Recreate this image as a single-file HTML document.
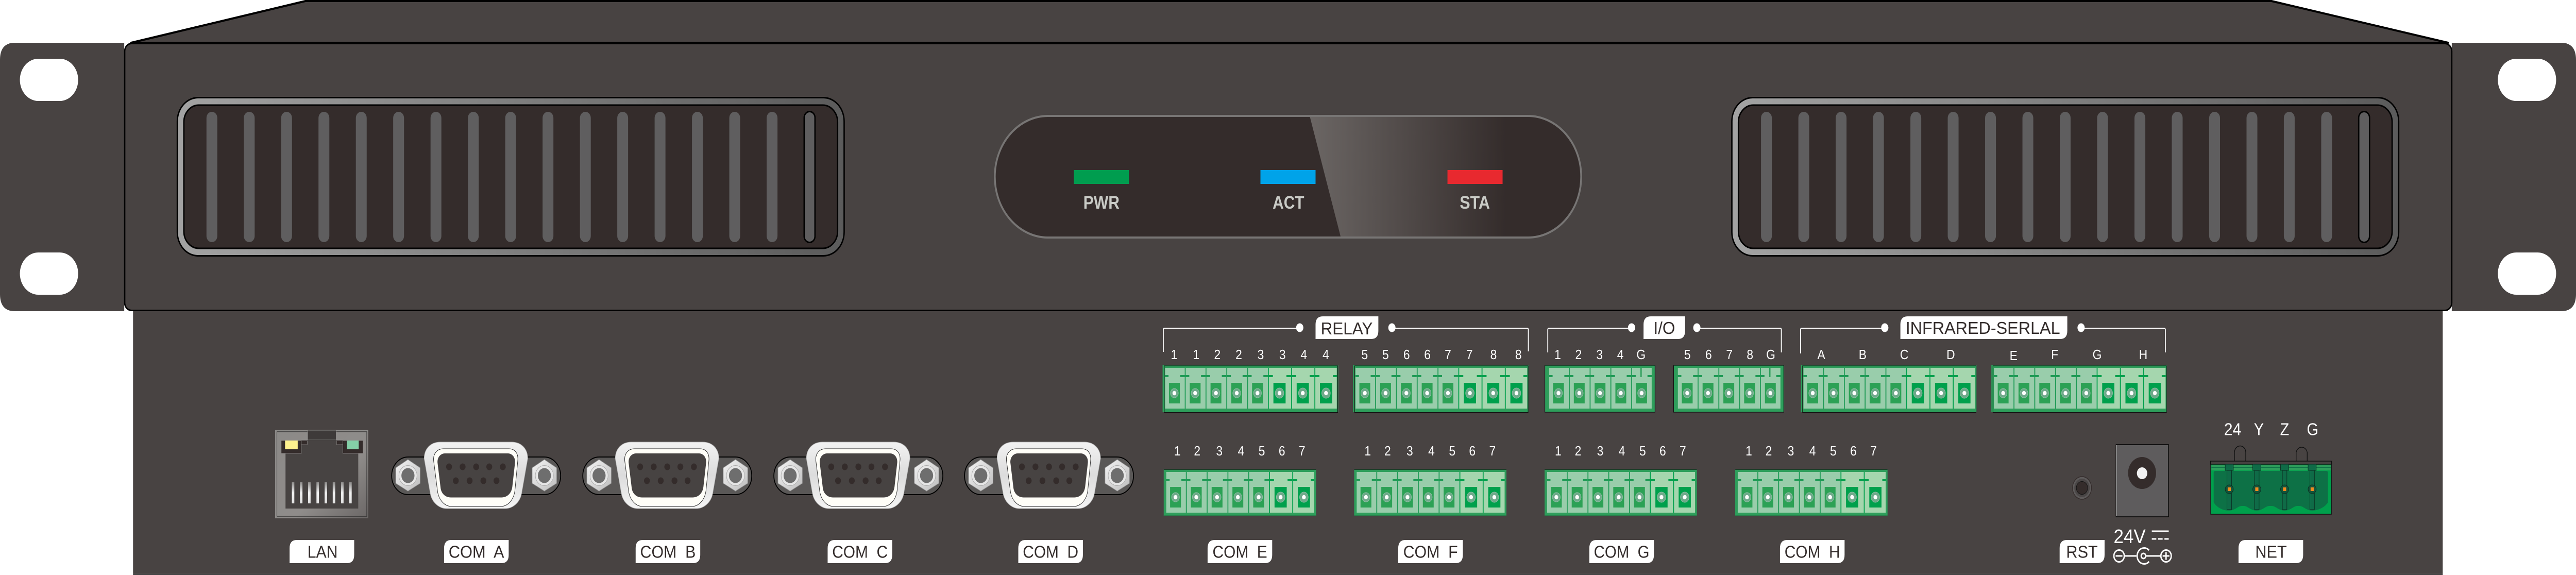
<!DOCTYPE html>
<html>
<head>
<meta charset="utf-8">
<style>
html,body{margin:0;padding:0;background:#fff;width:100%;height:100%;overflow:hidden}
svg{display:block;width:100vw;height:100vh}
text{font-family:"Liberation Sans",sans-serif}
.l{font-size:33px;fill:#332c2b}
.n{font-size:26px;fill:#fff;text-anchor:middle}
.s{font-size:33px;fill:#fff}
.p{font-size:35px;font-weight:bold;fill:#c9cbc6}
</style>
</head>
<body>
<svg xmlns="http://www.w3.org/2000/svg" viewBox="0 0 5702 1116" preserveAspectRatio="none">
<defs>
<linearGradient id="band" x1="0" x2="1" y1="0" y2="0"><stop offset="0" stop-color="#a3a3a3"/><stop offset="1" stop-color="#5b5b5b"/></linearGradient>
<linearGradient id="hl" gradientUnits="userSpaceOnUse" x1="2899" x2="3334" y1="0" y2="0"><stop offset="0" stop-color="#6b6664"/><stop offset="1" stop-color="#342c2b"/></linearGradient>
<linearGradient id="rj" x1="0" x2="1" y1="0" y2="1"><stop offset="0" stop-color="#8c8a88"/><stop offset=".6" stop-color="#8f8c8a"/><stop offset="1" stop-color="#6b6766"/></linearGradient>
<linearGradient id="pin" x1="0" x2="0" y1="0" y2="1"><stop offset="0" stop-color="#8d8b8a"/><stop offset=".5" stop-color="#f2f2f2"/><stop offset="1" stop-color="#e2e2e2"/></linearGradient>
<linearGradient id="nut" x1="0" x2="1" y1="0" y2="1"><stop offset="0" stop-color="#f4f4f4"/><stop offset="1" stop-color="#bdbdbd"/></linearGradient>
<linearGradient id="shell" x1="0" x2="0" y1="0" y2="1"><stop offset="0" stop-color="#f2f2f2"/><stop offset=".5" stop-color="#dcdcdc"/><stop offset="1" stop-color="#f4f4f4"/></linearGradient>
<clipPath id="ledc"><rect x="2202" y="225" width="1298" height="236" rx="118" ry="118"/></clipPath>

<g id="vent">
<rect x="392.5" y="189.5" width="1476" height="307" rx="46" fill="url(#band)" stroke="#000" stroke-width="3"/>
<rect x="407" y="204" width="1447" height="278" rx="33" fill="#342c2b" stroke="#000" stroke-width="3"/>
<g fill="#5f5e5f">
<rect x="457" y="217" width="24" height="253" rx="12"/><rect x="539.7" y="217" width="24" height="253" rx="12"/><rect x="622.3" y="217" width="24" height="253" rx="12"/><rect x="705" y="217" width="24" height="253" rx="12"/><rect x="787.7" y="217" width="24" height="253" rx="12"/><rect x="870.3" y="217" width="24" height="253" rx="12"/><rect x="953" y="217" width="24" height="253" rx="12"/><rect x="1035.7" y="217" width="24" height="253" rx="12"/><rect x="1118.3" y="217" width="24" height="253" rx="12"/><rect x="1201" y="217" width="24" height="253" rx="12"/><rect x="1283.7" y="217" width="24" height="253" rx="12"/><rect x="1366.3" y="217" width="24" height="253" rx="12"/><rect x="1449" y="217" width="24" height="253" rx="12"/><rect x="1531.7" y="217" width="24" height="253" rx="12"/><rect x="1614.3" y="217" width="24" height="253" rx="12"/><rect x="1697" y="217" width="24" height="253" rx="12"/>
<rect x="1780" y="216.5" width="24" height="254" rx="12" stroke="#000" stroke-width="3"/>
</g>
</g>

<g id="cs">
<rect x="0" y="6" width="46" height="79" fill="#99cdab"/>
<rect x="0" y="6" width="2" height="79" fill="#1e9a55"/>
<rect x="0" y="20" width="10" height="4" fill="#1e9a55"/><rect x="36" y="20" width="10" height="4" fill="#1e9a55"/>
<rect x="11" y="35" width="24" height="40" fill="#2ca155"/>
<ellipse cx="23" cy="55" rx="8.7" ry="9" fill="#6fa98a" stroke="#8fbfa5"/>
<circle cx="23" cy="55" r="4.2" fill="#fff"/>
</g>
<g id="cw">
<rect x="0" y="6" width="51.5" height="79" fill="#a5d6ae"/>
<rect x="0" y="6" width="2" height="79" fill="#00a04c"/>
<rect x="0" y="20" width="11" height="4" fill="#00a04c"/><rect x="41" y="20" width="10.5" height="4" fill="#00a04c"/>
<rect x="12.2" y="35" width="27" height="40" fill="#00a04c"/>
<ellipse cx="25.7" cy="55" rx="9.5" ry="10" fill="#6fa98a" stroke="#8fbfa5"/>
<circle cx="25.7" cy="55" r="4.2" fill="#fff"/>
</g>

<g id="b53">
<rect x="0" y="0" width="388.5" height="92" fill="#2e9e5b"/>
<use href="#cs" x="3"/><use href="#cs" x="49"/><use href="#cs" x="95"/><use href="#cs" x="141"/><use href="#cs" x="187"/>
<use href="#cw" x="233"/><use href="#cw" x="284.5"/><use href="#cw" x="336"/>
<rect x="0" y="0" width="5.5" height="92" fill="#2e9e5b"/>
<rect x="385.5" y="0" width="3" height="92" fill="#2e9e5b"/>
<rect x="3.5" y="2" width="384" height="90.5" fill="none" stroke="#111" stroke-width="1.2"/>
</g>
<g id="b52">
<rect x="0" y="0" width="337" height="92" fill="#2e9e5b"/>
<use href="#cs" x="3"/><use href="#cs" x="49"/><use href="#cs" x="95"/><use href="#cs" x="141"/><use href="#cs" x="187"/>
<use href="#cw" x="233"/><use href="#cw" x="284.5"/>
<rect x="0" y="0" width="5.5" height="92" fill="#2e9e5b"/>
<rect x="333" y="0" width="4" height="92" fill="#2e9e5b"/>
<rect x="0" y="0.5" width="337" height="1.2" fill="#111"/><rect x="0" y="90.8" width="337" height="1.2" fill="#111"/>
</g>
<g id="b50">
<rect x="0" y="0" width="245" height="92" fill="#2e9e5b"/>
<use href="#cs" x="7.7"/><use href="#cs" x="53.7"/><use href="#cs" x="99.7"/><use href="#cs" x="145.7"/><use href="#cs" x="191.7"/>
<rect x="0" y="0" width="10" height="92" fill="#2e9e5b"/>
<rect x="237" y="0" width="8" height="92" fill="#2e9e5b"/>
<rect x="212" y="6" width="3" height="18" fill="#2e9e5b"/>
<rect x="0.6" y="1" width="243.8" height="91" fill="none" stroke="#111" stroke-width="1.2"/>
</g>

<g id="db9">
<rect x="867" y="887" width="374" height="73" rx="36.5" fill="#5a5857" stroke="#000" stroke-width="2"/>
<polygon points="903,892 930,908 930,938 903,953 876,938 876,908" fill="url(#nut)" stroke="#999"/>
<ellipse cx="903" cy="923" rx="20" ry="19.5" fill="#e6e6e6" stroke="#aaa"/>
<circle cx="903" cy="923" r="14.5" fill="#6e6e6e"/>
<polygon points="1205,892 1232,908 1232,938 1205,953 1178,938 1178,908" fill="url(#nut)" stroke="#999"/>
<ellipse cx="1205" cy="923" rx="20" ry="19.5" fill="#e6e6e6" stroke="#aaa"/>
<circle cx="1205" cy="923" r="14.5" fill="#6e6e6e"/>
<path d="M975,858 H1132 C1155,858 1168,872 1168,890 L1155,955 C1152,975 1135,987 1118,987 H989 C972,987 955,975 952,955 L939,890 C939,872 952,858 975,858 Z" fill="url(#shell)" stroke="#bbb"/>
<path d="M982,871 H1126 C1140,871 1148,880 1146,895 L1140,950 C1138,970 1124,983 1108,983 H1000 C984,983 970,970 968,950 L960,895 C958,880 968,871 982,871 Z" fill="#fffef8" stroke="#222" stroke-width="1"/>
<path d="M985,880 H1124 C1134,880 1141,888 1140,898 L1134,945 C1132,958 1122,965.5 1110,965.5 H998 C986,965.5 976,958 975,945 L968.5,898 C967.5,888 975,880 985,880 Z" fill="#474342"/>
<g fill="#342c2b">
<ellipse cx="994" cy="906" rx="6.5" ry="6.5"/><ellipse cx="1024" cy="906" rx="6.5" ry="6.5"/><ellipse cx="1054" cy="906" rx="6.5" ry="6.5"/><ellipse cx="1083" cy="906" rx="6.5" ry="6.5"/><ellipse cx="1113" cy="906" rx="6.5" ry="6.5"/>
<ellipse cx="1009" cy="933" rx="6.5" ry="6.5"/><ellipse cx="1039.5" cy="933" rx="6.5" ry="6.5"/><ellipse cx="1070" cy="933" rx="6.5" ry="6.5"/><ellipse cx="1099" cy="933" rx="6.5" ry="6.5"/>
</g>
</g>
</defs>

<!-- ears -->
<path d="M33,83 H275 V604 H33 Q0,604 0,571 V116 Q0,83 33,83 Z" fill="#484342"/>
<path d="M5669,83 H5427 V604 H5669 Q5702,604 5702,571 V116 Q5702,83 5669,83 Z" fill="#484342"/>
<g fill="#fff">
<rect x="44" y="114" width="129" height="82" rx="41"/>
<rect x="44" y="490" width="129" height="82" rx="41"/>
<rect x="5529" y="114" width="129" height="82" rx="41"/>
<rect x="5529" y="490" width="129" height="82" rx="41"/>
</g>

<!-- lower body -->
<rect x="294.5" y="600" width="5112.5" height="514.5" fill="#484342"/>
<rect x="294.5" y="1114" width="5112.5" height="1.5" fill="#000"/>

<!-- top -->
<polygon points="290,83 676,2 5028,2 5419,83" fill="#484342" stroke="#000" stroke-width="4" stroke-linejoin="round"/>

<!-- front panel -->
<rect x="276" y="84.5" width="5151" height="518" rx="15" fill="#484342" stroke="#000" stroke-width="3"/>

<use href="#vent"/>
<use href="#vent" x="3441"/>

<!-- LED window -->
<rect x="2202" y="225" width="1298" height="236" rx="118" fill="#342c2b"/>
<polygon points="2899,225 3500,225 3500,461 2968,461" fill="url(#hl)" clip-path="url(#ledc)"/>
<rect x="2202" y="225" width="1298" height="236" rx="118" fill="none" stroke="#777574" stroke-width="4"/>
<rect x="2377" y="330" width="122" height="27" fill="#009d4f"/>
<rect x="2790" y="330" width="122" height="27" fill="#00a3e9"/>
<rect x="3204" y="330" width="122" height="27" fill="#e8292f"/>
<text class="p" x="2398" y="405" textLength="80" lengthAdjust="spacingAndGlyphs">PWR</text>
<text class="p" x="2817" y="405" textLength="70" lengthAdjust="spacingAndGlyphs">ACT</text>
<text class="p" x="3231" y="405" textLength="67" lengthAdjust="spacingAndGlyphs">STA</text>

<!-- RJ45 -->
<rect x="609" y="835" width="206" height="171" fill="url(#rj)"/>
<rect x="613" y="838" width="199" height="164" fill="none" stroke="#222" stroke-width="1.2"/>
<rect x="681" y="835" width="63" height="19" fill="#3e3a39" stroke="#8b8987"/>
<rect x="632" y="880" width="161" height="107" fill="#474342"/>
<rect x="667" y="854" width="92" height="27" fill="#474342"/>
<rect x="622.5" y="855" width="44.5" height="25" fill="#342c2b" stroke="#8b8987" stroke-width=".8"/>
<rect x="759" y="855" width="44.5" height="25" fill="#342c2b" stroke="#8b8987" stroke-width=".8"/>
<rect x="631" y="855" width="28" height="17" fill="#fdf18e"/>
<rect x="768" y="855" width="26" height="17" fill="#84cfa7"/>
<rect x="667" y="855" width="13" height="8" fill="#342c2b" stroke="#8b8987" stroke-width=".8"/>
<rect x="745" y="855" width="14" height="8" fill="#342c2b" stroke="#8b8987" stroke-width=".8"/>
<g fill="url(#pin)">
<rect x="646" y="936" width="5.5" height="41"/><rect x="664" y="936" width="5.5" height="41"/><rect x="682" y="936" width="5.5" height="41"/><rect x="700.5" y="936" width="5.5" height="41"/><rect x="718.5" y="936" width="5.5" height="41"/><rect x="736.5" y="936" width="5.5" height="41"/><rect x="755" y="936" width="5.5" height="41"/><rect x="773" y="936" width="5.5" height="41"/>
</g>

<!-- DB9 -->
<use href="#db9"/>
<use href="#db9" x="423"/>
<use href="#db9" x="846"/>
<use href="#db9" x="1268"/>

<!-- labels -->
<g fill="#fff">
<path d="M657 1048h127v29q0 16 -16 16h-127v-29q0 -16 16 -16z"/>
<path d="M999 1048h127v29q0 16 -16 16h-127v-29q0 -16 16 -16z"/>
<path d="M1423 1048h127v29q0 16 -16 16h-127v-29q0 -16 16 -16z"/>
<path d="M1848 1048h127v29q0 16 -16 16h-127v-29q0 -16 16 -16z"/>
<path d="M2270 1048h127v29q0 16 -16 16h-127v-29q0 -16 16 -16z"/>
<path d="M2689 1048h127v29q0 16 -16 16h-127v-29q0 -16 16 -16z"/>
<path d="M3111 1048h127v29q0 16 -16 16h-127v-29q0 -16 16 -16z"/>
<path d="M3534 1048h127v29q0 16 -16 16h-127v-29q0 -16 16 -16z"/>
<path d="M3956 1048h127v29q0 16 -16 16h-127v-29q0 -16 16 -16z"/>
<path d="M4575 1048h83.5v29q0 16 -16 16h-83.5v-29q0 -16 16 -16z"/>
<path d="M4971 1048h127v29q0 16 -16 16h-127v-29q0 -16 16 -16z"/>
<path d="M2928 614h123v28q0 16 -16 16h-123v-28q0 -16 16 -16z"/>
<path d="M3654 614h76v28q0 16 -16 16h-76v-28q0 -16 16 -16z"/>
<path d="M4222.5 614h353.5v28q0 16 -16 16h-353.5v-28q0 -16 16 -16z"/>
</g>
<g>
<text class="l" x="680.5" y="1082.5" textLength="67" lengthAdjust="spacingAndGlyphs">LAN</text>
<text class="l" x="993" y="1082.5" textLength="123" lengthAdjust="spacingAndGlyphs" xml:space="preserve">COM  A</text>
<text class="l" x="1417" y="1082.5" textLength="123" lengthAdjust="spacingAndGlyphs" xml:space="preserve">COM  B</text>
<text class="l" x="1842" y="1082.5" textLength="123" lengthAdjust="spacingAndGlyphs" xml:space="preserve">COM  C</text>
<text class="l" x="2264" y="1082.5" textLength="123" lengthAdjust="spacingAndGlyphs" xml:space="preserve">COM  D</text>
<text class="l" x="2684" y="1082.5" textLength="121" lengthAdjust="spacingAndGlyphs" xml:space="preserve">COM  E</text>
<text class="l" x="3106" y="1082.5" textLength="121" lengthAdjust="spacingAndGlyphs" xml:space="preserve">COM  F</text>
<text class="l" x="3528" y="1082.5" textLength="123" lengthAdjust="spacingAndGlyphs" xml:space="preserve">COM  G</text>
<text class="l" x="3950" y="1082.5" textLength="123" lengthAdjust="spacingAndGlyphs" xml:space="preserve">COM  H</text>
<text class="l" x="4573.5" y="1082.5" textLength="70" lengthAdjust="spacingAndGlyphs">RST</text>
<text class="l" x="4992" y="1082.5" textLength="70" lengthAdjust="spacingAndGlyphs">NET</text>
<text class="l" x="2923.5" y="649" textLength="115" lengthAdjust="spacingAndGlyphs">RELAY</text>
<text class="l" x="3660" y="648" textLength="48" lengthAdjust="spacingAndGlyphs">I/O</text>
<text class="l" x="4218" y="648" textLength="342" lengthAdjust="spacingAndGlyphs">INFRARED-SERLAL</text>
</g>

<!-- brackets -->
<g fill="none" stroke="#fff" stroke-width="2">
<path d="M2575 683V640q0 -3 3 -3H2877"/><path d="M3081 637H3380q3 0 3 3V682"/>
<path d="M3426 684V640q0 -3 3 -3H3611"/><path d="M3756 637H3940q3 0 3 3V684"/>
<path d="M3985.5 686V640q0 -3 3 -3H4172"/><path d="M4606 637H4790q3 0 3 3V684"/>
</g>
<g fill="#fff">
<ellipse cx="2877" cy="636" rx="8" ry="8.5"/><ellipse cx="3081" cy="636" rx="8" ry="8.5"/>
<ellipse cx="3611.5" cy="636" rx="8" ry="8.5"/><ellipse cx="3756" cy="636" rx="8" ry="8.5"/>
<ellipse cx="4172" cy="636" rx="8" ry="8.5"/><ellipse cx="4606.5" cy="636" rx="8" ry="8.5"/>
</g>

<!-- blocks -->
<use href="#b53" x="2573.5" y="708"/>
<use href="#b53" x="2995" y="708"/>
<use href="#b50" x="3419" y="708"/>
<use href="#b50" x="3704" y="708"/>
<use href="#b53" x="3986.5" y="708"/>
<use href="#b53" x="4408" y="708"/>
<use href="#b52" x="2576" y="910"/>
<use href="#b52" x="2997.5" y="910"/>
<use href="#b52" x="3419" y="910"/>
<use href="#b52" x="3841" y="910"/>

<!-- numbers -->
<g>
<text class="n" x="2599" y="697">1</text><text class="n" x="2647.5" y="697">1</text><text class="n" x="2694.6" y="697">2</text><text class="n" x="2742" y="697">2</text><text class="n" x="2790.5" y="697">3</text><text class="n" x="2838.7" y="697">3</text><text class="n" x="2886" y="697">4</text><text class="n" x="2934.6" y="697">4</text>
<text class="n" x="3020.7" y="697">5</text><text class="n" x="3067" y="697">5</text><text class="n" x="3113.6" y="697">6</text><text class="n" x="3159.6" y="697">6</text><text class="n" x="3205" y="697">7</text><text class="n" x="3252.6" y="697">7</text><text class="n" x="3306" y="697">8</text><text class="n" x="3361" y="697">8</text>
<text class="n" x="3448" y="697">1</text><text class="n" x="3494" y="697">2</text><text class="n" x="3540.6" y="697">3</text><text class="n" x="3586.6" y="697">4</text><text class="n" x="3632.5" y="697">G</text>
<text class="n" x="3735" y="697">5</text><text class="n" x="3782" y="697">6</text><text class="n" x="3828" y="697">7</text><text class="n" x="3873.6" y="697">8</text><text class="n" x="3919.5" y="697">G</text>
<text class="n" x="4031.4" y="697">A</text><text class="n" x="4123" y="697">B</text><text class="n" x="4215" y="697">C</text><text class="n" x="4318" y="697">D</text>
<text class="n" x="4457" y="699">E</text><text class="n" x="4548" y="697">F</text><text class="n" x="4642" y="697">G</text><text class="n" x="4744" y="697">H</text>
<text class="n" x="2606" y="884">1</text><text class="n" x="2650" y="884">2</text><text class="n" x="2699" y="884">3</text><text class="n" x="2747" y="884">4</text><text class="n" x="2793" y="884">5</text><text class="n" x="2837.5" y="884">6</text><text class="n" x="2882" y="884">7</text>
<text class="n" x="3027.5" y="884">1</text><text class="n" x="3071.5" y="884">2</text><text class="n" x="3120.5" y="884">3</text><text class="n" x="3168.5" y="884">4</text><text class="n" x="3214.5" y="884">5</text><text class="n" x="3259" y="884">6</text><text class="n" x="3303.5" y="884">7</text>
<text class="n" x="3449" y="884">1</text><text class="n" x="3493" y="884">2</text><text class="n" x="3542" y="884">3</text><text class="n" x="3590" y="884">4</text><text class="n" x="3636" y="884">5</text><text class="n" x="3680.5" y="884">6</text><text class="n" x="3725" y="884">7</text>
<text class="n" x="3871" y="884">1</text><text class="n" x="3915" y="884">2</text><text class="n" x="3964" y="884">3</text><text class="n" x="4012" y="884">4</text><text class="n" x="4058" y="884">5</text><text class="n" x="4102.5" y="884">6</text><text class="n" x="4147" y="884">7</text>
</g>

<!-- RST -->
<ellipse cx="4608.5" cy="947" rx="21" ry="22" fill="#5d5a5a" stroke="#342c2b" stroke-width="1.5"/>
<ellipse cx="4608.5" cy="947" rx="17" ry="18" fill="#4a4646"/>
<ellipse cx="4608.5" cy="947" rx="12.5" ry="12.5" fill="#342c2b" stroke="#111"/>

<!-- DC jack -->
<rect x="4684" y="863" width="116" height="140" fill="#5e5c5d" stroke="#000" stroke-width="1.5"/>
<rect x="4684" y="864" width="1.5" height="138" fill="#aaa"/>
<ellipse cx="4741.5" cy="918" rx="31" ry="31" fill="#342c2b"/>
<ellipse cx="4741.5" cy="918.5" rx="11.5" ry="11.5" fill="#f2f2f2"/>
<text x="4678.5" y="1054" font-size="38" fill="#fff" textLength="71" lengthAdjust="spacingAndGlyphs">24V</text>
<rect x="4763" y="1029.5" width="37.5" height="3" fill="#fff"/>
<rect x="4763" y="1044.5" width="10" height="3" fill="#fff"/><rect x="4777" y="1044.5" width="10" height="3" fill="#fff"/><rect x="4791" y="1044.5" width="9.5" height="3" fill="#fff"/>
<g fill="none" stroke="#fff" stroke-width="3">
<circle cx="4690.6" cy="1079" r="11.5"/>
<path d="M4683 1079H4698"/>
<path d="M4702 1079H4729"/>
<path d="M4757 1068A15.5 15.5 0 1 0 4757 1090"/>
<circle cx="4744.6" cy="1079" r="5"/>
<path d="M4750 1079H4783"/>
<circle cx="4794.6" cy="1079" r="11.5"/>
<path d="M4787 1079H4802M4794.6 1071.5V1086.5"/>
</g>

<!-- NET connector -->
<path d="M4946,895 V878 A12.5,12.5 0 0 1 4971,878 V895 Z" fill="#484342" stroke="#111" stroke-width="1.5"/>
<path d="M5082.5,895 V878 A12.5,12.5 0 0 1 5107,878 V895 Z" fill="#484342" stroke="#111" stroke-width="1.5"/>
<rect x="4893" y="895" width="268" height="6" fill="#484342" stroke="#111" stroke-width="1.5"/>
<rect x="4893.5" y="901" width="267" height="97" fill="#00a04c" stroke="#111" stroke-width="1.5"/>
<rect x="4895" y="903" width="264" height="10" fill="#2e9e5b"/>
<rect x="4895" y="907" width="264" height="1" fill="#0d7146"/>
<path d="M4904,914 H5149 Q5153,914 5153,918 V975 C5146,985 5130,991 5118,991 C5105,991 5098,982 5090,982 H5085 C5077,982 5070,991 5057,991 C5044,991 5037,982 5029,982 H5023 C5015,982 5008,991 4995,991 C4982,991 4975,982 4967,982 H4962 C4954,982 4947,991 4934,991 C4920,991 4907,985 4900,975 V918 Q4900,914 4904,914 Z" fill="#0d7146"/>
<g fill="#0f6b47" stroke="#0b2a20" stroke-width="1">
<rect x="4925.5" y="901" width="18" height="12"/><rect x="4986.5" y="901" width="18" height="12"/><rect x="5048" y="901" width="18" height="12"/><rect x="5109" y="901" width="18" height="12"/>
<rect x="4929.5" y="913" width="10" height="76"/><rect x="4990.5" y="913" width="10" height="76"/><rect x="5052" y="913" width="10" height="76"/><rect x="5113" y="913" width="10" height="76"/>
<ellipse cx="4934.5" cy="949.5" rx="9" ry="8.4" fill="#13543b"/><ellipse cx="4995.5" cy="949.5" rx="9" ry="8.4" fill="#13543b"/><ellipse cx="5057" cy="949.5" rx="9" ry="8.4" fill="#13543b"/><ellipse cx="5118" cy="949.5" rx="9" ry="8.4" fill="#13543b"/>
</g>
<g fill="#f08a1f">
<rect x="4931" y="946" width="7" height="7"/><rect x="4992" y="946" width="7" height="7"/><rect x="5053.5" y="946" width="7" height="7"/><rect x="5114.5" y="946" width="7" height="7"/>
</g>
<text class="s" x="4923" y="844.5" textLength="38" lengthAdjust="spacingAndGlyphs">24</text>
<text class="s" x="5000" y="844.5" text-anchor="middle">Y</text>
<text class="s" x="5057" y="844.5" text-anchor="middle">Z</text>
<text class="s" x="5119" y="844.5" text-anchor="middle">G</text>
</svg>
</body>
</html>
